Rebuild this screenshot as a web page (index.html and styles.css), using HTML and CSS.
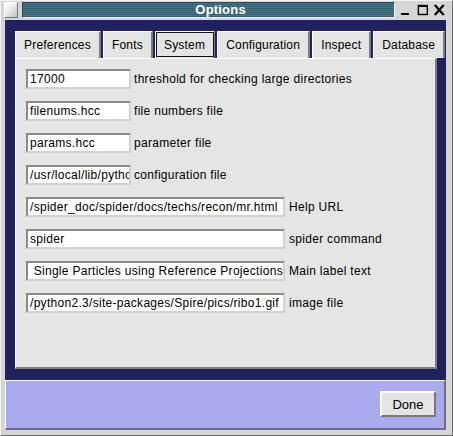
FILE: index.html
```html
<!DOCTYPE html>
<html>
<head>
<meta charset="utf-8">
<link rel="stylesheet" href="styles.css">
</head>
<body>
<div class="win">
  <div class="titlebar">
    <div class="menu-btn"></div>
    <div class="title"><span>Options</span></div>
    <svg class="ctrls" width="51" height="16" viewBox="0 0 51 16">
      <rect x="6" y="11" width="8" height="2" fill="#000"/>
      <rect x="23.5" y="3.5" width="9" height="9" fill="none" stroke="#000" stroke-width="1.4"/>
      <rect x="23" y="3" width="10" height="2" fill="#000"/>
      <path d="M40 3 L49 13 M49 3 L40 13" stroke="#000" stroke-width="2.2" fill="none"/>
    </svg>
  </div>
  <div class="client">
    <div class="notebook">
      <div class="tabs">
        <div class="tab">Preferences</div>
        <div class="tab">Fonts</div>
        <div class="tab tab-sel">System</div>
        <div class="tab">Configuration</div>
        <div class="tab">Inspect</div>
        <div class="tab">Database</div>
      </div>
      <div class="panel">
        <div class="row"><div class="entry">17000</div><span class="label">threshold for checking large directories</span></div>
        <div class="row"><div class="entry">filenums.hcc</div><span class="label">file numbers file</span></div>
        <div class="row"><div class="entry">params.hcc</div><span class="label">parameter file</span></div>
        <div class="row"><div class="entry">/usr/local/lib/pytho</div><span class="label">configuration file</span></div>
        <div class="row"><div class="entry entry-long">/spider_doc/spider/docs/techs/recon/mr.html</div><span class="label label-long">Help URL</span></div>
        <div class="row"><div class="entry entry-long">spider</div><span class="label label-long">spider command</span></div>
        <div class="row"><div class="entry entry-long entry-pre"> Single Particles using Reference Projections</div><span class="label label-long">Main label text</span></div>
        <div class="row"><div class="entry entry-long">/python2.3/site-packages/Spire/pics/ribo1.gif</div><span class="label label-long">image file</span></div>
      </div>
    </div>
  </div>
  <div class="buttonbar">
    <div class="done">Done</div>
  </div>
</div>
</body>
</html>
```

FILE: styles.css
```css
html, body {
  margin: 0;
  padding: 0;
  background: #d6d6d6;
}
body {
  font-family: "Liberation Sans", Arial, sans-serif;
  font-size: 12px;
  color: #000;
}
.win {
  width: 453px;
  height: 436px;
  box-sizing: border-box;
  background: #d6d6d6;
  padding: 0 6px 5px 4px;
  display: flex;
  flex-direction: column;
  border-left: 1px solid #f4f4f4;
  border-top: 1px solid #f4f4f4;
  border-right: 1px solid #6e6e6e;
  border-bottom: 1px solid #6e6e6e;
}
.titlebar {
  height: 19px;
  display: flex;
  align-items: flex-start;
  padding-top: 1px;
  box-sizing: border-box;
  margin-left: -1px;
}
.menu-btn {
  width: 14px;
  height: 16px;
  box-sizing: border-box;
  background: linear-gradient(135deg, #ffffff 0%, #e8e8e8 50%, #bdbdbd 100%);
  border-top: 1px solid #ffffff;
  border-left: 1px solid #ffffff;
  border-right: 1px solid #777;
  border-bottom: 1px solid #777;
}
.title {
  width: 375px;
  height: 16px;
  margin-left: 4px;
  box-sizing: border-box;
  border: 1px solid #2b4650;
  border-right-color: #f0f0f0;
  border-bottom-color: #f0f0f0;
  background: repeating-linear-gradient(to bottom, #477787 0 1px, #35606f 1px 2px);
  color: #fff;
  font-weight: bold;
  font-size: 13px;
  line-height: 14px;
  text-align: center;
  padding-left: 24px;
  letter-spacing: 0.2px;
}
.ctrls {
  display: block;
  margin-top: 0;
}
.client {
  height: 361px;
  box-sizing: border-box;
  background: #21215f;
  padding: 10px 9px 11px 10px;
}
.notebook {
  height: 100%;
  display: flex;
  flex-direction: column;
}
.tabs {
  height: 28px;
  display: flex;
  gap: 2px;
  padding-top: 1px;
  box-sizing: border-box;
}
.tab {
  flex: 1 1 auto;
  box-sizing: border-box;
  height: 27px;
  padding: 0 8px;
  background: #e4e4e4;
  border-top: 1px solid #ffffff;
  border-left: 1px solid #ffffff;
  border-right: 2px solid #7c7c7c;
  display: flex;
  align-items: center;
  justify-content: center;
  white-space: nowrap;
  font-size: 12px;
  letter-spacing: 0.2px;
}
.tab-sel {
  outline: 1px solid #111;
  outline-offset: -2px;
}
.panel {
  flex: 1;
  box-sizing: border-box;
  background: #e5e5e5;
  border-top: 1px solid #ffffff;
  border-left: 1px solid #ffffff;
  border-right: 2px solid #7c7c7c;
  border-bottom: 2px solid #7c7c7c;
  padding: 10px 0 0 10px;
  display: flex;
  flex-direction: column;
  gap: 12px;
}
.row {
  display: flex;
  align-items: center;
  height: 20px;
}
.entry {
  width: 105px;
  height: 20px;
  box-sizing: border-box;
  background: #ffffff;
  border-top: 2px solid #8a8a8a;
  border-left: 2px solid #8a8a8a;
  border-right: 2px solid #d2d2d2;
  border-bottom: 2px solid #d2d2d2;
  padding: 0 0 0 2px;
  line-height: 16px;
  white-space: nowrap;
  overflow: hidden;
  font-size: 12px;
  letter-spacing: 0.3px;
}
.entry-long {
  width: 259px;
}
.entry-pre {
  white-space: pre;
}
.label {
  margin-left: 3px;
  white-space: nowrap;
  letter-spacing: 0.3px;
}
.label-long {
  margin-left: 4px;
}
.buttonbar {
  height: 50px;
  box-sizing: border-box;
  background: #aaaaee;
  border-top: 1px solid #ffffff;
  border-left: 1px solid #ffffff;
  border-right: 2px solid #6a6a8a;
  border-bottom: 2px solid #6a6a8a;
  display: flex;
  justify-content: flex-end;
  align-items: flex-start;
  padding: 10px 8px 0 0;
}
.done {
  width: 56px;
  height: 26px;
  box-sizing: border-box;
  background: #e4e4e4;
  border-top: 2px solid #ffffff;
  border-left: 2px solid #ffffff;
  border-right: 2px solid #7a7a7a;
  border-bottom: 2px solid #7a7a7a;
  display: flex;
  align-items: center;
  justify-content: center;
  font-size: 13px;
}
```
